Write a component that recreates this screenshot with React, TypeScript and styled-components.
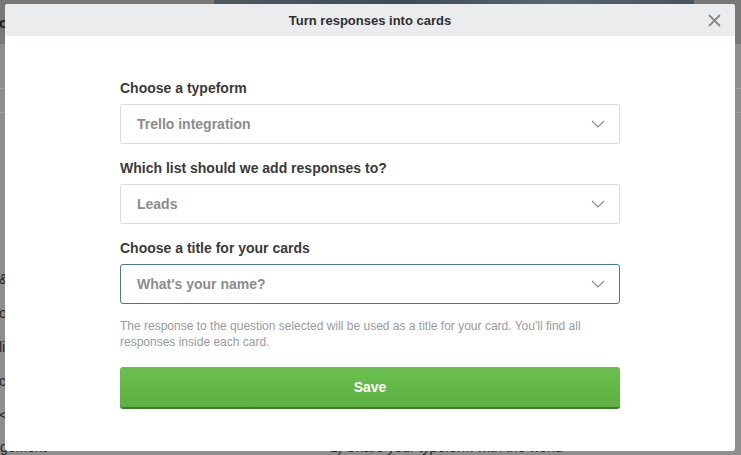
import React from "react";
import styled, { createGlobalStyle } from "styled-components";

const GlobalStyle = createGlobalStyle`
  html, body { margin: 0; padding: 0; }
  body { font-family: "Liberation Sans", Arial, sans-serif; }
  * { box-sizing: border-box; }
`;

const Page = styled.div`
  position: relative;
  width: 741px;
  height: 455px;
  overflow: hidden;
  background: #8e8e8e;
  display: flex;
  flex-direction: column;
`;

const TopBar = styled.div`
  height: 44px;
  background: #787878;
  display: flex;
  align-items: flex-start;
`;

const Brand = styled.div`
  width: 215px;
  height: 44px;
  display: flex;
  align-items: center;
  font-size: 15px;
  font-weight: bold;
  color: #1f1f1f;
  margin-left: -1px;
`;

const Hero = styled.div`
  width: 480px;
  height: 44px;
  background: linear-gradient(90deg, #515860, #3f4b57 40%, #5a6570 70%, #4a525b);
`;

const Toolbar = styled.div`
  height: 48px;
  border-bottom: 1px solid #a3a3a3;
`;

const SubBar = styled.div`
  height: 26px;
  border-bottom: 1px solid #9d9d9d;
`;

const Body = styled.div`
  flex: 1;
  display: flex;
  flex-direction: column;
  padding-top: 158px;
`;

const SideList = styled.div`
  display: flex;
  flex-direction: column;
  gap: 18px;
  margin-left: -1px;
`;

const SideItem = styled.div`
  font-size: 14px;
  line-height: 16px;
  color: #262626;
  white-space: nowrap;
`;

const BottomRow = styled.div`
  display: flex;
  margin-top: 16px;
  font-size: 14px;
  line-height: 16px;
  color: #262626;
  white-space: nowrap;
`;

const BottomLeft = styled.div`
  width: 330px;
`;

const Modal = styled.div`
  position: absolute;
  left: 5px;
  top: 4px;
  width: 730px;
  height: 447px;
  background: #ffffff;
  border-radius: 3px;
  overflow: hidden;
  display: flex;
  flex-direction: column;
`;

const ModalHeader = styled.div`
  position: relative;
  height: 32px;
  background: #ebeced;
  display: flex;
  align-items: center;
  justify-content: center;
`;

const Title = styled.div`
  font-size: 13px;
  font-weight: bold;
  color: #2f2f2f;
`;

const CloseButton = styled.button`
  position: absolute;
  right: 13px;
  top: 8px;
  width: 16px;
  height: 16px;
  padding: 0;
  border: none;
  background: transparent;
  display: flex;
  align-items: center;
  justify-content: center;
  cursor: pointer;
`;

const ModalBody = styled.div`
  padding: 44px 115px 0;
  display: flex;
  flex-direction: column;
`;

const Field = styled.div`
  display: flex;
  flex-direction: column;
  gap: 8px;
  margin-bottom: 16px;
  &:last-of-type { margin-bottom: 0; }
`;

const Label = styled.div`
  font-size: 14px;
  line-height: 16px;
  font-weight: bold;
  color: #3a3a3a;
`;

const Select = styled.div<{ $focused?: boolean }>`
  height: 40px;
  border: 1px solid ${(p) => (p.$focused ? "#4478a4" : "#dadada")};
  border-radius: 3px;
  padding: 0 14px 0 16px;
  display: flex;
  align-items: center;
  justify-content: space-between;
  background: #fff;
`;

const SelectValue = styled.span`
  font-size: 14px;
  font-weight: bold;
  color: #8c8c8c;
`;

const Help = styled.p`
  margin: 14px 0 0;
  font-size: 12px;
  line-height: 16px;
  color: #9b9b9b;
  padding-right: 20px;
`;

const SaveButton = styled.button`
  margin-top: 17px;
  height: 42px;
  border: none;
  border-bottom: 2px solid #3e7c2c;
  border-radius: 3px;
  background: linear-gradient(180deg, #6bc04d 0%, #5bb041 100%);
  color: #ffffff;
  font-family: inherit;
  font-size: 14px;
  font-weight: bold;
  cursor: pointer;
`;

const Chevron = () => (
  <svg width="14" height="8" viewBox="0 0 14 8" fill="none">
    <path d="M1 1l6 6 6-6" stroke="#8a8a8a" strokeWidth="1.2" />
  </svg>
);

const XIcon = () => (
  <svg width="13" height="13" viewBox="0 0 13 13" fill="none">
    <path d="M1 1l11 11M12 1L1 12" stroke="#8a8a8a" strokeWidth="1.8" />
  </svg>
);

const fields = [
  { label: "Choose a typeform", value: "Trello integration" },
  { label: "Which list should we add responses to?", value: "Leads" },
  { label: "Choose a title for your cards", value: "What's your name?", focused: true },
];

export default function App() {
  return (
    <>
      <GlobalStyle />
      <Page>
        <TopBar>
          <Brand>c</Brand>
          <Hero />
        </TopBar>
        <Toolbar />
        <SubBar />
        <Body>
          <SideList>
            <SideItem>&amp;</SideItem>
            <SideItem>o</SideItem>
            <SideItem>li</SideItem>
            <SideItem>c</SideItem>
            <SideItem>&lt;</SideItem>
          </SideList>
          <BottomRow>
            <BottomLeft>gement</BottomLeft>
            <span>1) Share your typeform with the world</span>
          </BottomRow>
        </Body>
        <Modal>
          <ModalHeader>
            <Title>Turn responses into cards</Title>
            <CloseButton aria-label="Close">
              <XIcon />
            </CloseButton>
          </ModalHeader>
          <ModalBody>
            {fields.map((f) => (
              <Field key={f.label}>
                <Label>{f.label}</Label>
                <Select $focused={f.focused}>
                  <SelectValue>{f.value}</SelectValue>
                  <Chevron />
                </Select>
              </Field>
            ))}
            <Help>
              The response to the question selected will be used as a title for your card. You'll find all
              responses inside each card.
            </Help>
            <SaveButton>Save</SaveButton>
          </ModalBody>
        </Modal>
      </Page>
    </>
  );
}
